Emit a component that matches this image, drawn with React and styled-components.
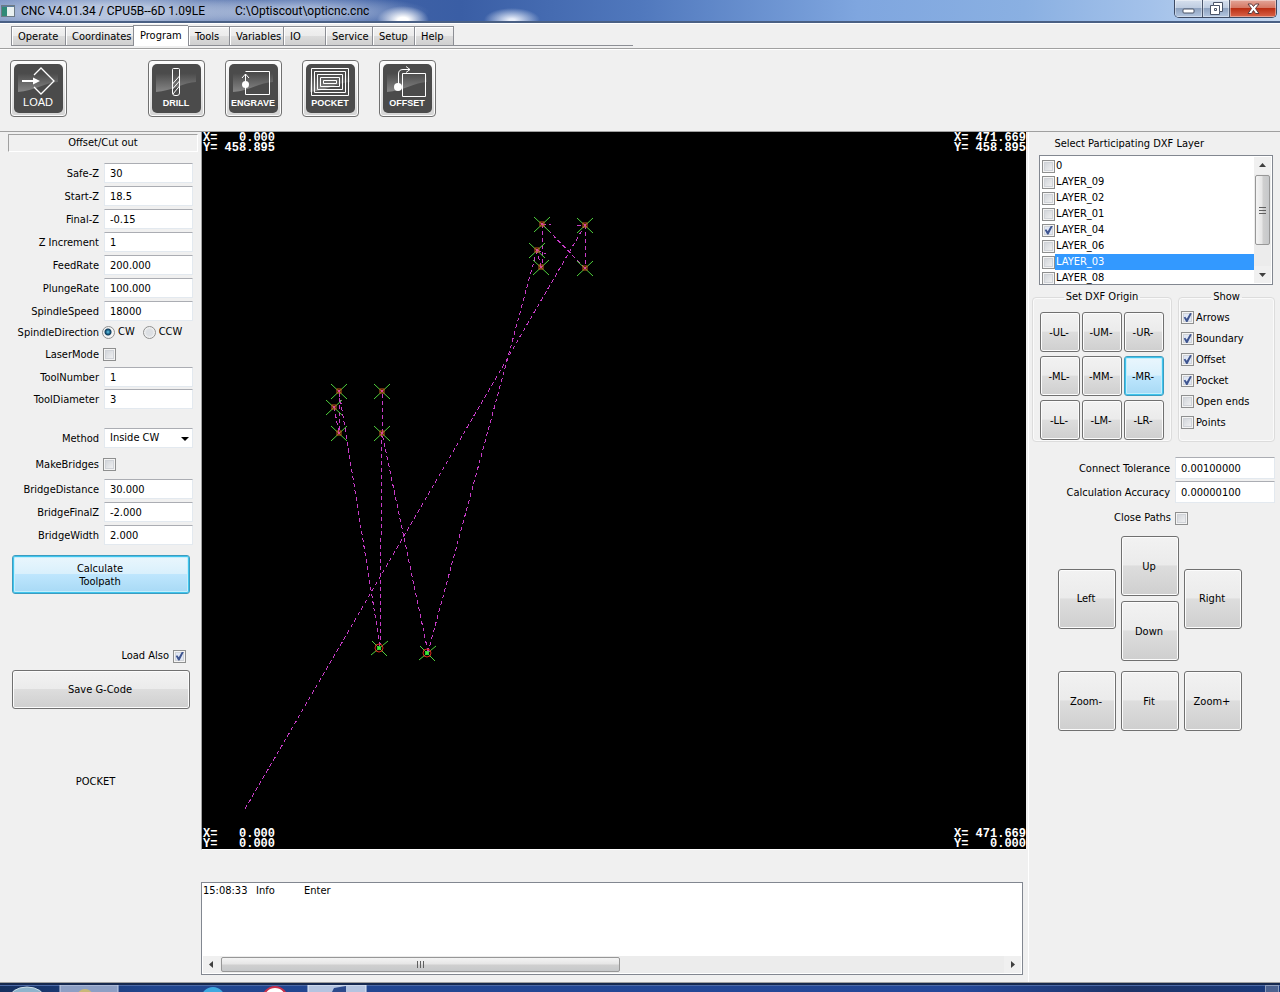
import React from "react";
import styled, { createGlobalStyle, css } from "styled-components";

const GlobalStyle = createGlobalStyle`
  * { box-sizing: border-box; }
  body {
    margin: 0;
    background: #f0f0f0;
    color: #000;
    font: 11px/14px Tahoma, "DejaVu Sans Condensed", "DejaVu Sans", sans-serif;
  }
  button, input, select { font: inherit; color: inherit; margin: 0; }
`;

const Window = styled.div`
  display: flex;
  flex-direction: column;
  min-height: 100vh;
`;

/* ---------- title bar ---------- */

const TitleBar = styled.header`
  display: flex;
  height: 23px;
  padding-left: 1px;
  border-bottom: 2px solid #4a6084;
  background:
    radial-gradient(ellipse 26px 14px at 403px 20px, #fff 20%, #ffffff00 100%),
    radial-gradient(ellipse 28px 12px at 512px 20px, #e8eefa 10%, #ffffff00 100%),
    radial-gradient(ellipse 180px 22px at 110px 12px, #c3cfe4e0 30%, #c3cfe400 100%),
    radial-gradient(ellipse 130px 18px at 300px 12px, #b4c3dfd0 30%, #b4c3df00 100%),
    linear-gradient(90deg, #6d88bd 0, #4766a6 20%, #3a5ea5 36%, #5078bd 50%, #7fa6df 67%, #8ab0e2 80%, #a4c2ea 90%, #c5d8f0 100%);
`;

const Title = styled.h1`
  flex: 1;
  display: flex;
  gap: 30px;
  margin: 0;
  padding-left: 6px;
  font: 12px/22px "Segoe UI", Roboto, sans-serif;
  white-space: pre;
`;

const WindowButtons = styled.div`
  display: flex;
  height: 18px;
  margin-right: 3px;
  border: 1px solid #3d4a63;
  border-top: 0;
  border-radius: 0 0 5px 5px;
  overflow: hidden;
`;

const WindowButton = styled.button`
  display: grid;
  place-items: center;
  width: ${(p) => (p.$close ? 47 : 27)}px;
  padding: 0;
  border: 0;
  border-left: ${(p) => (p.$first ? "0" : "1px solid #4b566c")};
  box-shadow: inset 0 0 0 1px #ffffff66;
  background: ${(p) =>
    p.$close
      ? "linear-gradient(#e3a598 0, #d4745f 50%, #bb2f14 50%, #d9644a 100%)"
      : "linear-gradient(#d6e0ee 0, #bccadf 50%, #8fa3c0 50%, #b3c6e0 100%)"};
`;

/* ---------- tabs ---------- */

const TabStrip = styled.nav`
  border-top: 1px solid #fff;
  border-bottom: 1px solid #a0a0a0;
  padding: 1px 0 2px 11px;
`;

const Tabs = styled.div`
  display: flex;
  align-items: flex-end;
  width: 622px;
  height: 21px;
  border-bottom: 1px solid #8c8e94;
`;

const Tab = styled.button`
  width: ${(p) => p.$width}px;
  height: 19px;
  padding: 2px 0 0 6px;
  border: 1px solid #8c8e94;
  border-bottom: 0;
  border-right-width: 0;
  box-shadow: inset 1px 1px 0 #fff;
  text-align: left;
  white-space: nowrap;
  background: linear-gradient(#f2f2f2 0, #ebebeb 50%, #dcdcdc 50%, #d0d0d0 100%);
  &:last-child { border-right-width: 1px; }
  ${(p) =>
    p.$active &&
    css`
      height: 21px;
      padding-bottom: 2px;
      margin-bottom: -1px;
      background: #fff;
    `}
`;

/* ---------- toolbar ---------- */

const Toolbar = styled.div`
  display: flex;
  gap: 20px;
  padding: 10px 10px 14px;
  border-top: 1px solid #fff;
  border-bottom: 1px solid #a0a0a0;
`;

const ToolButton = styled.button`
  width: 57px;
  height: 57px;
  padding: 3px;
  margin-right: ${(p) => (p.$apart ? 61 : 0)}px;
  border: 1px solid #707070;
  border-radius: 4px;
  background: linear-gradient(#fcfcfc, #d4d4d4);
  box-shadow: inset 0 0 0 1px #fcfcfc;
  svg { display: block; }
`;

/* ---------- page columns ---------- */

const Main = styled.main`
  display: grid;
  grid-template-columns: 201px minmax(0, 1fr) 252px;
  flex: 1;
  border-bottom: 1px solid #a0a0a0;
`;

const LeftPanel = styled.section`
  padding: 2px 8px 0;
`;

const PanelTitle = styled.h2`
  margin: 0 -5px 0 0;
  height: 18px;
  border: 1px solid #a0a0a0;
  border-right-color: #fff;
  border-bottom-color: #fff;
  font: inherit;
  line-height: 16px;
  text-align: center;
`;

const Fields = styled.div`
  display: flex;
  flex-direction: column;
  gap: ${(p) => p.$gap}px;
  margin-top: ${(p) => p.$top}px;
`;

const Field = styled.div`
  display: flex;
  align-items: center;
  height: ${(p) => p.$height || 20}px;
`;

const FieldLabel = styled.label`
  width: ${(p) => p.$width || 91}px;
  margin-right: ${(p) => p.$gap || 5}px;
  padding-top: 2px;
  text-align: right;
  white-space: nowrap;
`;

const TextInput = styled.input`
  width: ${(p) => p.$width || 89}px;
  height: 100%;
  padding: 0 0 0 5px;
  border: 1px solid #e3e9ef;
  border-top-color: #abadb3;
  background: #fff;
  outline: 0;
`;

const SelectBox = styled.div`
  position: relative;
  width: 89px;
  height: 20px;
  &::after {
    content: "";
    position: absolute;
    right: 4px;
    top: 9px;
    border: 4px solid transparent;
    border-top-color: #000;
    border-bottom: 0;
    pointer-events: none;
  }
`;

const Select = styled.select`
  appearance: none;
  width: 100%;
  height: 100%;
  padding: 0 0 0 5px;
  border: 1px solid #e3e9ef;
  border-top-color: #abadb3;
  border-radius: 0;
  background: #fff;
`;

const Check = styled.input.attrs({ type: "checkbox" })`
  appearance: none;
  flex: none;
  position: relative;
  width: 13px;
  height: 13px;
  border: 1px solid #8e8f8f;
  background: linear-gradient(135deg, #cbcfd5, #f6f6f6);
  box-shadow: inset 0 0 0 1px #f4f4f4, inset 0 0 0 2px #d0d3d8;
  &:checked { background: #dfe6f4; }
  &:checked::after {
    content: "";
    position: absolute;
    inset: 1px;
    background: #3f5590;
    clip-path: polygon(8% 50%, 25% 42%, 42% 65%, 78% 0, 98% 6%, 50% 100%, 36% 100%);
  }
`;

const Radio = styled.input.attrs({ type: "radio" })`
  appearance: none;
  width: 13px;
  height: 13px;
  border: 1px solid #8e8f8f;
  border-radius: 50%;
  background: radial-gradient(circle, #dcdfe3 40%, #f4f4f4 70%);
  &:checked {
    background: radial-gradient(circle at 5px 5px, #6fd0ee 0, #1b6288 2px, #123c5a 3px, #f4f4f4 4px);
  }
`;

const RadioLabel = styled.label`
  display: flex;
  align-items: center;
  gap: 3px;
  margin: 0 8px 0 -2px;
  & + & { margin-left: 0; }
`;

const PushButton = styled.button`
  width: ${(p) => p.$width || 58}px;
  height: ${(p) => p.$height || 60}px;
  padding: 0 2px 0 0;
  border: 1px solid #707070;
  border-radius: 3px;
  line-height: 13px;
  white-space: pre-line;
  background: linear-gradient(#f2f2f2 0, #ebebeb 48%, #dddddd 50%, #cfcfcf 100%);
  box-shadow: inset 0 0 0 1px #fcfcfc;
  ${(p) =>
    p.$hot &&
    css`
      border-color: #3c9cbf;
      background: linear-gradient(#eaf6fd 0, #d9f0fc 48%, #bee6fd 50%, #a7d9f5 100%);
      box-shadow: inset 0 0 0 1px #3fc4ee, inset 0 0 0 2px #c4effc;
    `}
`;

const ActionButton = styled(PushButton)`
  display: block;
  width: auto;
  min-width: 178px;
  height: 39px;
  margin: ${(p) => p.$top}px 0 0 4px;
`;

const LoadAlso = styled.label`
  display: flex;
  align-items: center;
  justify-content: flex-end;
  gap: 4px;
  height: 20px;
  margin: 52px 7px 0 0;
`;

const ModeName = styled.p`
  margin: 66px 10px 0 0;
  text-align: center;
`;

/* ---------- drawing area and log ---------- */

const Center = styled.section`
  display: flex;
  flex-direction: column;
`;

const Viewport = styled.div`
  position: relative;
  margin-right: 2px;
  border-left: 1px solid #a0a0a0;
  border-bottom: 1px solid #fff;
  background: #000;
  svg { display: block; width: 100%; height: auto; }
`;

const Corner = styled.pre`
  position: absolute;
  margin: 0;
  padding: 1px 0 0 1px;
  ${(p) => p.$v}: 0;
  ${(p) => p.$h}: 0;
  color: #fff;
  font: bold 12px/10px "Liberation Mono", monospace;
`;

const Log = styled.div`
  display: flex;
  flex-direction: column;
  height: 93px;
  margin: 32px 5px 7px 0;
  border: 1px solid #828790;
  background: #fff;
`;

const LogLine = styled.div`
  flex: 1;
  display: grid;
  grid-template-columns: 53px 48px 1fr;
  padding: 1px 1px 0;
`;

const ScrollBar = styled.div`
  display: flex;
  flex-direction: ${(p) => (p.$vertical ? "column" : "row")};
  ${(p) => (p.$vertical ? "width" : "height")}: 17px;
  margin: ${(p) => (p.$vertical ? "1px 1px 1px 0" : "0 1px 1px")};
  background: #ececec;
`;

const ScrollArrow = styled.button`
  display: grid;
  place-items: center;
  width: 17px;
  height: 17px;
  padding: 0;
  border: 0;
  background: #f0f0f0;
`;

const ScrollTrack = styled.div`
  flex: 1;
`;

const ScrollThumb = styled.div`
  display: grid;
  place-items: center;
  width: ${(p) => (p.$vertical ? "15px" : "399px")};
  height: ${(p) => (p.$vertical ? "70px" : "15px")};
  margin: 1px;
  border: 1px solid #979797;
  border-radius: 2px;
  background: linear-gradient(${(p) => (p.$vertical ? "90deg" : "180deg")}, #f4f4f4 0, #e6e6e6 45%, #cfcfcf 55%, #c6c8ca 100%);
`;

/* ---------- right column ---------- */

const RightPanel = styled.section`
  padding: 5px 5px 0 3px;
  border-left: 1px solid #fff;
`;

const LayerTitle = styled.h2`
  margin: 0 0 4px;
  padding-right: 71px;
  font: inherit;
  text-align: right;
`;

const LayerBox = styled.div`
  display: flex;
  height: 130px;
  margin: 0 2px 0 7px;
  border: 1px solid #828790;
  background: #fff;
`;

const LayerList = styled.ul`
  flex: 1;
  margin: 0;
  padding: 2px 0 0 2px;
  list-style: none;
  overflow: hidden;
`;

const LayerItem = styled.li`
  label { display: flex; align-items: center; height: 16px; }
  span {
    flex: 1;
    line-height: 16px;
    padding-left: 1px;
    ${(p) => p.$selected && "background: #3399ff; color: #fff;"}
  }
`;

const Groups = styled.div`
  display: flex;
  gap: 6px;
  margin-top: 5px;
`;

const Group = styled.fieldset`
  flex: ${(p) => (p.$grow ? "1" : "none")};
  min-width: 0;
  margin: 0;
  padding: ${(p) => (p.$grow ? "3px 2px 0" : "8px 7px 1px")};
  border: 1px solid #dcdcdc;
  border-radius: 4px;
  box-shadow: inset 0 0 0 1px #fafafa;
  legend { margin: 0 auto; padding: 0 2px; }
`;

const OriginGrid = styled.div`
  display: grid;
  grid-template-columns: repeat(3, 40px);
  gap: 4px 2px;
`;

const ShowList = styled.div`
  display: flex;
  flex-direction: column;
  label { display: flex; align-items: center; gap: 2px; height: 21px; }
`;

const Settings = styled.div`
  display: flex;
  flex-direction: column;
  align-items: flex-end;
  gap: 2px;
  margin-top: 15px;
`;

const ClosePaths = styled.label`
  display: flex;
  align-items: center;
  gap: 4px;
  height: 24px;
  margin: 1px 87px 0 0;
`;

const Pad = styled.div`
  display: grid;
  grid-template-columns: repeat(3, 58px);
  align-items: center;
  gap: 10px 5px;
  margin: 6px 0 0 26px;
`;

const PadMiddle = styled.div`
  display: grid;
  gap: 5px;
`;

/* ---------- taskbar ---------- */

const Taskbar = styled.footer`
  display: flex;
  justify-content: space-between;
  height: 9px;
  border-top: 2px solid #16294f;
  box-shadow: inset 0 1px 0 #4d6aa6;
  background: linear-gradient(90deg, #16305f 0, #21468f 12%, #24489a 75%, #1d3468 88%, #1a3a7c 100%);
  svg { display: block; height: 7px; }
`;

/* ---------- icons ---------- */

const Tile = ({ id, label, size = 9, weight = "bold", children }) => (
  <svg width="49" height="49" viewBox="0 0 49 49" aria-hidden="true">
    <defs>
      <linearGradient id={`g-${id}`} x1="0" y1="0" x2="0" y2="1">
        <stop offset="0" stopColor="#4a4a4a" />
        <stop offset="1" stopColor="#868686" />
      </linearGradient>
    </defs>
    <rect x="0" y="0" width="49" height="49" rx="5" fill="#4b4b4b" />
    <path d="M4 9H44V18C32 18 20 27 4 28Z" fill={`url(#g-${id})`} />
    <g fill="none" stroke="#fff" strokeWidth="1">{children}</g>
    <text x="24" y="42" textAnchor="middle" fill="#fff" fontFamily="Liberation Sans, Arial, sans-serif" fontWeight={weight} fontSize={size}>
      {label}
    </text>
  </svg>
);

const tools = [
  {
    label: "LOAD", size: 11, weight: "normal", apart: true,
    art: (
      <>
        <path d="M20 11L27 4L40 17L27 30L20 23" strokeWidth="1.3" />
        <path d="M8 17H20" strokeWidth="2" />
        <path d="M19 13.500L26 17L19 20.500Z" fill="#fff" stroke="none" />
      </>
    ),
  },
  {
    label: "DRILL",
    art: <path d="M20.500 29V5.500Q20.500 4.500 21.500 4.500H26.500Q27.500 4.500 27.500 5.500V29Q27.500 31.500 25 31.500H23Q20.500 31.500 20.500 29ZM20.500 20L27.500 12M20.500 25L27.500 17M21 30L27.500 22" />,
  },
  {
    label: "ENGRAVE",
    art: (
      <>
        <path d="M16.500 7.500H40.500V30.500H16.500V10M13 14L16.500 10L20 14" />
        <circle cx="16.500" cy="20.500" r="3.500" fill="#fff" stroke="none" />
      </>
    ),
  },
  {
    label: "POCKET",
    art: <path d="M5.500 4.500H42.500V31.500H5.500ZM8.500 7.500H39.500V28.500H8.500ZM11.500 10.500H36.500V25.500H11.500ZM14.500 13.500H33.500V22.500H14.500ZM17.500 16.500H30.500V19.500H17.500Z" />,
  },
  {
    label: "OFFSET",
    art: (
      <>
        <path d="M19.500 9.500H42.500V32.500H19.500ZM15.500 22V10Q15.500 5.500 20 5.500H27M23 2.500L27 5.500L23 8.500" />
        <circle cx="15" cy="23" r="4" fill="#fff" stroke="none" />
      </>
    ),
  },
];

const Arrow = ({ d }) => (
  <svg width="7" height="7" viewBox="0 0 7 7" aria-hidden="true"><path d={d} fill="#404040" /></svg>
);

const Grip = ({ vertical }) => (
  <svg width="9" height="9" viewBox="0 0 9 9" stroke="#606060" aria-hidden="true">
    <path d={vertical ? "M1 1.500H8M1 4.500H8M1 7.500H8" : "M1.500 1V8M4.500 1V8M7.500 1V8"} />
  </svg>
);

/* ---------- data ---------- */

const tabs = [
  ["Operate", 54], ["Coordinates", 68], ["Program", 55], ["Tools", 41], ["Variables", 54],
  ["IO", 42], ["Service", 47], ["Setup", 42], ["Help", 40],
];

const feeds = [
  ["Safe-Z", "30"], ["Start-Z", "18.5"], ["Final-Z", "-0.15"], ["Z Increment", "1"],
  ["FeedRate", "200.000"], ["PlungeRate", "100.000"], ["SpindleSpeed", "18000"],
];
const toolFields = [["ToolNumber", "1"], ["ToolDiameter", "3"]];
const bridges = [["BridgeDistance", "30.000"], ["BridgeFinalZ", "-2.000"], ["BridgeWidth", "2.000"]];
const layers = ["0", "LAYER_09", "LAYER_02", "LAYER_01", "LAYER_04", "LAYER_06", "LAYER_03", "LAYER_08"];
const origins = ["UL", "UM", "UR", "ML", "MM", "MR", "LL", "LM", "LR"];
const shows = [["Arrows", true], ["Boundary", true], ["Offset", true], ["Pocket", true], ["Open ends", false], ["Points", false]];

const crosses = [
  [340, 92], [383, 93], [335, 118], [339, 135], [383, 136],
  [137, 259], [180, 259], [132, 275], [137, 301], [180, 301],
];
const ends = [[177, 516], [225, 521]];
const moves = [
  "M43 677L383 93", "M383 93V136", "M383 136L340 92", "M340 92V135", "M339 135L335 118",
  "M335 118L226 520", "M226 520L180 301", "M180 301V259", "M180 301L178 514",
  "M178 514L137 259", "M137 259V301", "M132 275L137 301", "M340 92H349", "M375 93H383", "M335 118L344 122",
];

const TextRows = ({ rows }) =>
  rows.map(([name, value]) => (
    <Field key={name}>
      <FieldLabel htmlFor={name}>{name}</FieldLabel>
      <TextInput id={name} defaultValue={value} />
    </Field>
  ));

const Toolpath = () => (
  <svg viewBox="0 0 824 717" role="img" aria-label="Toolpath">
    <g stroke="#c83cc8" strokeWidth="1" strokeDasharray="4 3" fill="none" shapeRendering="crispEdges">
      {moves.map((d) => <path key={d} d={d} />)}
    </g>
    {crosses.map(([x, y]) => (
      <g key={`${x}-${y}`} fill="none" transform={`translate(${x} ${y})`}>
        <path d="M-8 -7L8 8M-8 8L8 -7" stroke="#4fd03c" />
        <rect x="-2" y="-2" width="4" height="4" stroke="#c8561c" />
        <rect x="-1" y="-1" width="2" height="2" fill="#e0409a" />
      </g>
    ))}
    {ends.map(([x, y]) => (
      <g key={`${x}-${y}`} fill="none" transform={`translate(${x} ${y})`}>
        <path d="M-8 7L9 -7M-7 -7L8 8" stroke="#4fd03c" />
        <circle r="4" stroke="#d8281c" />
        <circle r="2" fill="#38e838" />
      </g>
    ))}
  </svg>
);

export default function App() {
  return (
    <Window>
      <GlobalStyle />
      <TitleBar>
        <svg width="14" height="22" viewBox="0 0 14 22" aria-hidden="true">
          <rect x="0.500" y="5.500" width="13" height="11" fill="#e8f0f0" stroke="#6c7a86" />
          <rect x="1" y="7" width="5" height="9" fill="#2f8a78" />
          <rect x="1" y="6" width="12" height="1" fill="#5a7c9c" />
        </svg>
        <Title>
          <span>CNC V4.01.34 / CPU5B--6D 1.09LE</span>
          <span>C:\Optiscout\opticnc.cnc</span>
        </Title>
        <WindowButtons>
          <WindowButton $first aria-label="Minimize">
            <svg width="13" height="13"><rect x="1" y="7" width="11" height="4" rx="1" fill="#fff" stroke="#4a5468" /></svg>
          </WindowButton>
          <WindowButton aria-label="Restore">
            <svg width="13" height="13" fill="#fff" stroke="#4a5468">
              <path d="M3.500 0.500H12.500V9.500H9.500V12.500H0.500V3.500H3.500Z" />
              <path d="M3.500 3.500H9.500V9.500M4.500 6.500H6.500V8.500H4.500Z" fill="none" />
            </svg>
          </WindowButton>
          <WindowButton $close aria-label="Close">
            <svg width="13" height="12"><path d="M1 1H4.500L6.500 3.500L8.500 1H12L8.500 5.500L12 10.500H8.500L6.500 7.500L4.500 10.500H1L4.500 5.500Z" fill="#fff" stroke="#5c3a3c" /></svg>
          </WindowButton>
        </WindowButtons>
      </TitleBar>

      <TabStrip>
        <Tabs>
          {tabs.map(([name, width]) => (
            <Tab key={name} $width={width} $active={name === "Program"}>{name}</Tab>
          ))}
        </Tabs>
      </TabStrip>

      <Toolbar>
        {tools.map((t) => (
          <ToolButton key={t.label} $apart={t.apart}>
            <Tile id={t.label} label={t.label} size={t.size} weight={t.weight}>{t.art}</Tile>
          </ToolButton>
        ))}
      </Toolbar>

      <Main>
        <LeftPanel>
          <PanelTitle>Offset/Cut out</PanelTitle>
          <Fields $gap={3} $top={11}><TextRows rows={feeds} /></Fields>
          <Fields $gap={2} $top={1}>
            <Field>
              <FieldLabel as="span">SpindleDirection</FieldLabel>
              <RadioLabel><Radio name="direction" defaultChecked />CW</RadioLabel>
              <RadioLabel><Radio name="direction" />CCW</RadioLabel>
            </Field>
            <Field>
              <FieldLabel htmlFor="laser" $gap={4}>LaserMode</FieldLabel>
              <Check id="laser" />
            </Field>
          </Fields>
          <Fields $gap={2} $top={3}><TextRows rows={toolFields} /></Fields>
          <Fields $gap={6} $top={19}>
            <Field>
              <FieldLabel htmlFor="method">Method</FieldLabel>
              <SelectBox><Select id="method"><option>Inside CW</option></Select></SelectBox>
            </Field>
            <Field>
              <FieldLabel htmlFor="bridges" $gap={4}>MakeBridges</FieldLabel>
              <Check id="bridges" />
            </Field>
          </Fields>
          <Fields $gap={3} $top={5}><TextRows rows={bridges} /></Fields>
          <ActionButton $top={10} $hot>{"Calculate\nToolpath"}</ActionButton>
          <LoadAlso>Load Also<Check defaultChecked /></LoadAlso>
          <ActionButton $top={4}>Save G-Code</ActionButton>
          <ModeName>POCKET</ModeName>
        </LeftPanel>

        <Center>
          <Viewport>
            <Toolpath />
            <Corner $v="top" $h="left">{"X=   0.000\nY= 458.895"}</Corner>
            <Corner $v="top" $h="right">{"X= 471.669\nY= 458.895"}</Corner>
            <Corner $v="bottom" $h="left">{"X=   0.000\nY=   0.000"}</Corner>
            <Corner $v="bottom" $h="right">{"X= 471.669\nY=   0.000"}</Corner>
          </Viewport>
          <Log>
            <LogLine><span>15:08:33</span><span>Info</span><span>Enter</span></LogLine>
            <ScrollBar>
              <ScrollArrow aria-label="Scroll left"><Arrow d="M5 0V7L1 3.500Z" /></ScrollArrow>
              <ScrollThumb><Grip /></ScrollThumb>
              <ScrollTrack />
              <ScrollArrow aria-label="Scroll right"><Arrow d="M2 0V7L6 3.500Z" /></ScrollArrow>
            </ScrollBar>
          </Log>
        </Center>

        <RightPanel>
          <LayerTitle>Select Participating DXF Layer</LayerTitle>
          <LayerBox>
            <LayerList>
              {layers.map((name) => (
                <LayerItem key={name} $selected={name === "LAYER_03"}>
                  <label><Check defaultChecked={name === "LAYER_04"} /><span>{name}</span></label>
                </LayerItem>
              ))}
            </LayerList>
            <ScrollBar $vertical>
              <ScrollArrow aria-label="Scroll up"><Arrow d="M0 5H7L3.500 1Z" /></ScrollArrow>
              <ScrollThumb $vertical><Grip vertical /></ScrollThumb>
              <ScrollTrack />
              <ScrollArrow aria-label="Scroll down"><Arrow d="M0 2H7L3.500 6Z" /></ScrollArrow>
            </ScrollBar>
          </LayerBox>

          <Groups>
            <Group>
              <legend>Set DXF Origin</legend>
              <OriginGrid>
                {origins.map((o) => (
                  <PushButton key={o} $width={40} $height={40} $hot={o === "MR"}>{`-${o}-`}</PushButton>
                ))}
              </OriginGrid>
            </Group>
            <Group $grow>
              <legend>Show</legend>
              <ShowList>
                {shows.map(([name, on]) => (
                  <label key={name}><Check defaultChecked={on} />{name}</label>
                ))}
              </ShowList>
            </Group>
          </Groups>

          <Settings>
            <Field $height={22}>
              <FieldLabel htmlFor="tolerance" $width={120}>Connect Tolerance</FieldLabel>
              <TextInput id="tolerance" $width={100} defaultValue="0.00100000" />
            </Field>
            <Field $height={22}>
              <FieldLabel htmlFor="accuracy" $width={120}>Calculation Accuracy</FieldLabel>
              <TextInput id="accuracy" $width={100} defaultValue="0.00000100" />
            </Field>
            <ClosePaths>Close Paths<Check /></ClosePaths>
          </Settings>

          <Pad>
            <PushButton>Left</PushButton>
            <PadMiddle>
              <PushButton>Up</PushButton>
              <PushButton>Down</PushButton>
            </PadMiddle>
            <PushButton>Right</PushButton>
            <PushButton>Zoom-</PushButton>
            <PushButton>Fit</PushButton>
            <PushButton>Zoom+</PushButton>
          </Pad>
        </RightPanel>
      </Main>

      <Taskbar>
        <svg width="380" viewBox="0 0 380 7" aria-hidden="true">
          <ellipse cx="27" cy="14" rx="18" ry="12" fill="#8fb4cc" stroke="#cfe0ea" />
          <rect x="60" y="0" width="58" height="8" fill="#8d9fc4" stroke="#c6d0e6" />
          <circle cx="85" cy="12" r="8" fill="#c8b878" />
          <circle cx="213" cy="14" r="12" fill="#3fa9e0" />
          <circle cx="275" cy="14" r="12" fill="#fff" stroke="#c8304c" strokeWidth="2" />
          <rect x="308" y="0" width="58" height="8" fill="#b4c4e0" stroke="#e4ebf7" />
          <path d="M334 3L346 1V7H332Z" fill="#2c4a8c" />
        </svg>
        <svg width="15" viewBox="0 0 15 7" aria-hidden="true">
          <rect x="0.500" y="0.500" width="13" height="8" fill="#4c6290" stroke="#8c9cbc" />
        </svg>
      </Taskbar>
    </Window>
  );
}
